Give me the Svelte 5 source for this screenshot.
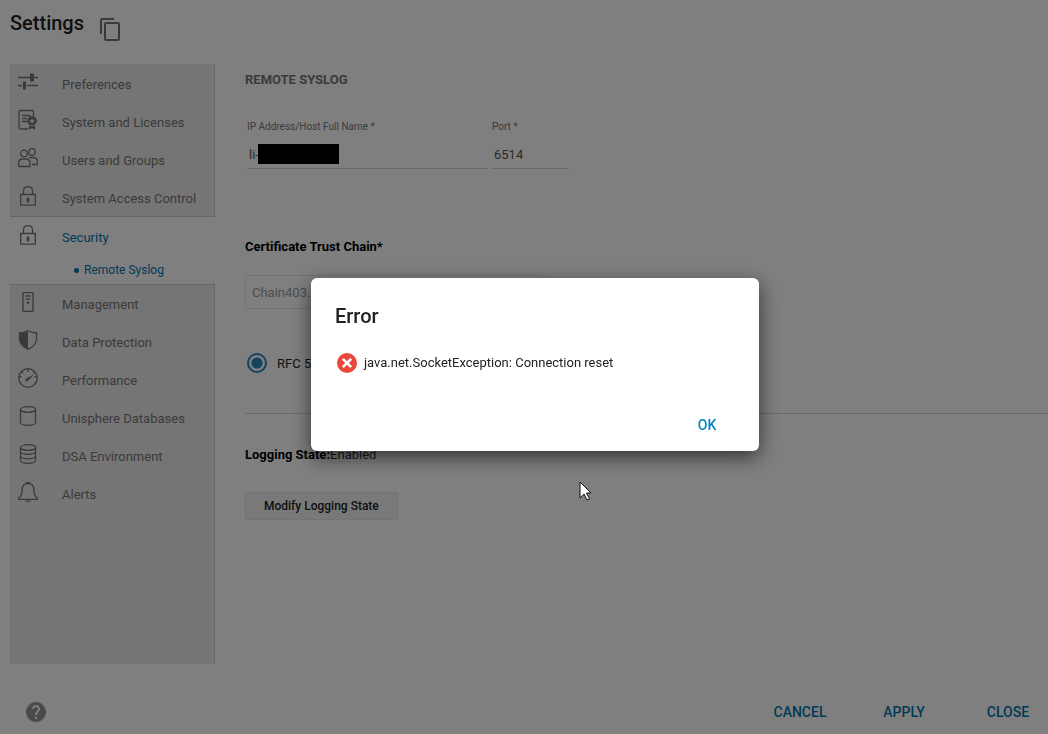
<script>
  const menu = [
    { name: 'Preferences', icon: 'sliders' },
    { name: 'System and Licenses', icon: 'license' },
    { name: 'Users and Groups', icon: 'users' },
    { name: 'System Access Control', icon: 'lock' },
    { name: 'Security', icon: 'lock', children: ['Remote Syslog'] },
    { name: 'Management', icon: 'server' },
    { name: 'Data Protection', icon: 'shield' },
    { name: 'Performance', icon: 'gauge' },
    { name: 'Unisphere Databases', icon: 'database' },
    { name: 'DSA Environment', icon: 'stack' },
    { name: 'Alerts', icon: 'bell' }
  ];

  let active = $state('Security');
  let host = $state('li-');
  let port = $state('6514');
  let format = $state('rfc5');
  let showError = $state(true);

  function select(e, name) {
    e.preventDefault();
    active = name;
  }
</script>

{#snippet menuIcon(icon)}
  <svg class="icon" viewBox="0 0 20 20" aria-hidden="true">
    {#if icon === 'sliders'}
      <path d="M0 5.500h12M16 5.500h4M0 13.500h4M9 13.500h11" />
      <path class="solid" d="M12 1.500h4v8h-4zM5 9.500h3v8H5z" />
    {:else if icon === 'license'}
      <path d="M15.500 6V1.500Q15.500 .5 14.500 .5H2.500Q1 .5 1 2V17.500Q1 19 2.500 19H10M4 5.500h8M4 8.500h5M4 11.500h5" />
      <path class="solid" fill-rule="evenodd" d="M14 6a4.800 4.800 0 1 0 0 9.600 4.800 4.800 0 0 0 0-9.600zm0 2.300.8 1.700 1.900.2-1.400 1.300.4 1.800-1.700-.9-1.700.9.4-1.800-1.400-1.300 1.900-.2z" />
      <path class="solid" d="M11 15.500l3 1 3-1V20l-3-2-3 2z" />
    {:else if icon === 'users'}
      <circle cx="6" cy="5.500" r="3.300" />
      <circle cx="14" cy="4" r="3.300" />
      <path d="M.7 18.500V15Q.7 11 4.500 11H8Q12 11 12 15v3.500zM11 9.500h4Q19.300 9.500 19.300 13.500V16.500H14" />
    {:else if icon === 'lock'}
      <path d="M2.700 8.500h14.600v10.700H2.700zM5.500 8.500V5Q5.500 .7 10 .7T14.500 5v3.500" />
      <rect class="solid" x="8.700" y="11.500" width="2.700" height="5" rx="1" />
    {:else if icon === 'server'}
      <path d="M5 .7h10v18.600H5zM7.500 4h5M7.500 7.200h5" />
      <circle class="solid" cx="10" cy="10.800" r="1.300" />
    {:else if icon === 'shield'}
      <path d="M10 .8Q6 3 1.500 3V9Q2 16 10 19.300 18 16 18.500 9V3Q14 3 10 .8z" />
      <path class="solid" d="M10 .8Q6 3 1.500 3V9Q2 16 10 19.300z" />
    {:else if icon === 'gauge'}
      <circle cx="10" cy="10" r="9.300" />
      <path d="M10 1v3M3.600 3.600l1.500 1.500M16.400 3.600l-1.500 1.500M1 8.500l2.500.6M19 8.500l-2.500.6" />
      <path class="solid" d="M16 6.500L8.200 10.500a1.500 1.500 0 1 0 2 2z" />
    {:else if icon === 'database'}
      <ellipse cx="10" cy="3.500" rx="7.500" ry="2.800" />
      <path d="M2.500 3.500v13Q3 19.300 10 19.300T17.500 16.500v-13" />
    {:else if icon === 'stack'}
      <ellipse cx="10" cy="3.500" rx="7.500" ry="2.800" />
      <path d="M2.500 3.500v13Q3 19.300 10 19.300T17.500 16.500v-13M2.500 7.500Q3 10.300 10 10.300T17.500 7.500M2.500 12Q3 14.800 10 14.800T17.500 12" />
    {:else if icon === 'bell'}
      <path d="M8.500 1.700V.7h3v1M.7 17.300v-1.500Q4 15 4 8 4 1.700 10 1.700T16 8Q16 15 19.300 15.800v1.500zM7.500 19.200h5" />
    {/if}
  </svg>
{/snippet}

<div class="page">
  <header>
    <h1>Settings</h1>
    <button class="copy" aria-label="Copy">
      <svg viewBox="0 0 20 23" width="20" height="23">
        <path d="M1 16V2.500Q1 1 2.500 1H14" />
        <rect x="5" y="5" width="14" height="17" rx="1" />
      </svg>
    </button>
  </header>

  <div class="body">
    <nav>
      {#each menu as item}
        <div class="group" class:open={item.name === active}>
          <a class="item" href="#top" onclick={(e) => select(e, item.name)}>
            {@render menuIcon(item.icon)}
            <span>{item.name}</span>
          </a>
          {#if item.children && item.name === active}
            {#each item.children as child}
              <a class="child" href="#top" onclick={(e) => e.preventDefault()}><i></i>{child}</a>
            {/each}
          {/if}
        </div>
      {/each}
    </nav>

    <main>
      <h2>REMOTE SYSLOG</h2>

      <div class="fields">
        <div class="field host">
          <label for="host">IP Address/Host Full Name *</label>
          <input id="host" type="text" bind:value={host} />
          <div class="mask"></div>
        </div>
        <div class="field port">
          <label for="port">Port *</label>
          <input id="port" type="text" bind:value={port} />
        </div>
      </div>

      <label class="strong" for="chain">Certificate Trust Chain*</label>
      <select id="chain" disabled>
        <option>Chain403.</option>
      </select>

      <label class="radio">
        <input type="radio" name="format" value="rfc5" bind:group={format} />
        RFC 5
      </label>

      <section>
        <p><b>Logging State:</b>Enabled</p>
        <button class="modify">Modify Logging State</button>
      </section>
    </main>
  </div>

  <footer>
    <button class="help" aria-label="Help">
      <svg viewBox="2 2 20 20" width="20" height="20">
        <path d="M12 2C6.480 2 2 6.480 2 12s4.480 10 10 10 10-4.480 10-10S17.520 2 12 2zm1 17h-2v-2h2v2zm2.070-7.750l-.9.920C13.450 12.900 13 13.500 13 15h-2v-.5c0-1.100.45-2.100 1.170-2.830l1.240-1.260c.37-.36.59-.86.59-1.410 0-1.100-.9-2-2-2s-2 .9-2 2H8c0-2.210 1.790-4 4-4s4 1.790 4 4c0 .88-.36 1.680-.93 2.250z" />
      </svg>
    </button>
    <button class="link">CANCEL</button>
    <button class="link">APPLY</button>
    <button class="link">CLOSE</button>
  </footer>
</div>

{#if showError}
  <div class="overlay">
    <div class="dialog" role="alertdialog" aria-modal="true" aria-labelledby="error-title">
      <h3 id="error-title">Error</h3>
      <div class="message">
        <svg viewBox="0 0 20 20" width="20" height="20" aria-hidden="true">
          <circle cx="10" cy="10" r="10" fill="#e9483b" />
          <path d="M5.800 5.800l8.400 8.400M14.200 5.800l-8.400 8.400" stroke="#fff" stroke-width="2.600" />
        </svg>
        <span>java.net.SocketException: Connection reset</span>
      </div>
      <div class="actions">
        <button class="link" onclick={() => (showError = false)}>OK</button>
      </div>
    </div>
  </div>
{/if}

<svg class="cursor" viewBox="0 0 13 20" width="13" height="20" aria-hidden="true">
  <path d="M1 1v16l4-4 3 6 2.500-1-3-6H12z" fill="#fff" stroke="#111" />
</svg>

<style>
  :global(body) {
    margin: 0;
    background: #fff;
    font-family: Roboto, "Liberation Sans", sans-serif;
    font-size: 13px;
    color: #222;
  }

  button,
  input,
  select {
    font: inherit;
    color: inherit;
    margin: 0;
    padding: 0;
    border: none;
    background: none;
  }

  button {
    cursor: pointer;
  }

  h1,
  h2,
  h3,
  p {
    margin: 0;
  }

  .page {
    display: flex;
    flex-direction: column;
    min-height: 100vh;
  }

  header {
    display: flex;
    align-items: flex-start;
    gap: 16px;
    height: 53px;
    padding: 11px 10px 0;
  }

  h1 {
    font-size: 20px;
    line-height: 24px;
    font-weight: 500;
    color: #222;
  }

  .copy {
    margin-top: 7px;
  }

  .copy svg {
    display: block;
    fill: none;
    stroke: #757575;
    stroke-width: 2;
  }

  .body {
    display: flex;
    flex: 1;
    padding-left: 10px;
  }

  nav {
    box-sizing: border-box;
    width: 205px;
    flex-shrink: 0;
    background: #ebebeb;
    border-right: 1px solid #ccc;
    padding-top: 1px;
  }

  .item {
    display: flex;
    align-items: center;
    height: 38px;
    padding-left: 8px;
    gap: 24px;
    color: #757575;
    text-decoration: none;
  }

  .icon {
    width: 20px;
    height: 20px;
    margin-bottom: 4px;
    overflow: visible;
    fill: none;
    stroke: #757575;
    stroke-width: 1.300;
  }

  .icon .solid {
    fill: #757575;
    stroke: none;
  }

  .group.open {
    margin: -1px -1px 0 0;
    padding-top: 1px;
    border-top: 1px solid #ccc;
    border-bottom: 1px solid #ccc;
    background: #fff;
  }

  .open .item {
    color: #0076ad;
  }

  .child {
    display: flex;
    align-items: center;
    gap: 5px;
    height: 28px;
    padding-left: 64px;
    font-size: 12px;
    color: #0076ad;
    text-decoration: none;
  }

  .child i {
    width: 5px;
    height: 5px;
    border-radius: 50%;
    background: #0076ad;
  }

  main {
    display: flex;
    flex-direction: column;
    align-items: flex-start;
    flex: 1;
    padding: 8px 0 0 30px;
  }

  h2 {
    font-size: 13px;
    line-height: 16px;
    font-weight: 700;
    color: #757575;
  }

  .fields {
    display: flex;
    gap: 4px;
    margin: 32px 0 70px 2px;
  }

  .field {
    position: relative;
    display: flex;
    flex-direction: column;
  }

  .field label {
    font-size: 10px;
    line-height: 14px;
    color: #757575;
  }

  .field input {
    height: 35px;
    padding: 6px 0 0 2px;
    box-sizing: border-box;
    border-bottom: 1px solid #d6d6d6;
    color: #555;
  }

  .host {
    width: 241px;
  }

  .port {
    width: 77px;
  }

  .mask {
    position: absolute;
    left: 11px;
    bottom: 5px;
    width: 81px;
    height: 20px;
    background: #000;
  }

  .strong {
    line-height: 16px;
    font-weight: 700;
    color: #000;
  }

  select {
    appearance: none;
    box-sizing: border-box;
    width: 300px;
    height: 34px;
    margin: 20px 0 44px;
    padding: 0 6px;
    border: 1px solid #e6e6e6;
    border-radius: 3px;
    color: #999;
    opacity: 1;
  }

  .radio {
    display: flex;
    align-items: center;
    gap: 10px;
    height: 20px;
    margin: 0 0 40px 2px;
  }

  .radio input {
    appearance: none;
    width: 20px;
    height: 20px;
    border: 2px solid #2589bd;
    border-radius: 50%;
  }

  .radio input:checked {
    background: radial-gradient(circle, #2589bd 5px, transparent 6px);
  }

  section {
    align-self: stretch;
    padding-top: 33px;
    border-top: 1px solid #d6d6d6;
  }

  section p {
    line-height: 16px;
    color: #333;
  }

  section b {
    color: #000;
  }

  .modify {
    height: 28px;
    margin-top: 29px;
    padding: 0 18px;
    border: 1px solid #e6e6e6;
    border-radius: 2px;
    background: #f2f2f2;
    font-size: 12px;
    font-weight: 500;
  }

  footer {
    display: flex;
    align-items: center;
    gap: 24px;
    height: 40px;
    padding: 28px 0 2px 26px;
  }

  .help {
    margin-right: auto;
  }

  .help svg {
    display: block;
    fill: #949494;
  }

  .link {
    width: 80px;
    height: 36px;
    font-size: 14px;
    font-weight: 500;
    color: #0076ad;
  }

  .overlay {
    position: fixed;
    inset: 0;
    display: flex;
    align-items: center;
    justify-content: center;
    box-sizing: border-box;
    padding: 0 0 6px 22px;
    background: rgba(0, 0, 0, 0.5);
  }

  .dialog {
    box-sizing: border-box;
    width: 448px;
    padding: 24px 12px 8px 24px;
    border-radius: 6px;
    background: #fff;
    box-shadow: 0 6px 20px rgba(0, 0, 0, 0.6);
  }

  h3 {
    font-size: 20px;
    line-height: 28px;
    font-weight: 500;
  }

  .message {
    display: flex;
    align-items: center;
    gap: 7px;
    height: 20px;
    margin: 23px 0 34px 2px;
  }

  .actions {
    display: flex;
    justify-content: flex-end;
  }

  .dialog .link {
    color: #0085c3;
  }

  .cursor {
    position: absolute;
    left: 579px;
    top: 481px;
  }
</style>
